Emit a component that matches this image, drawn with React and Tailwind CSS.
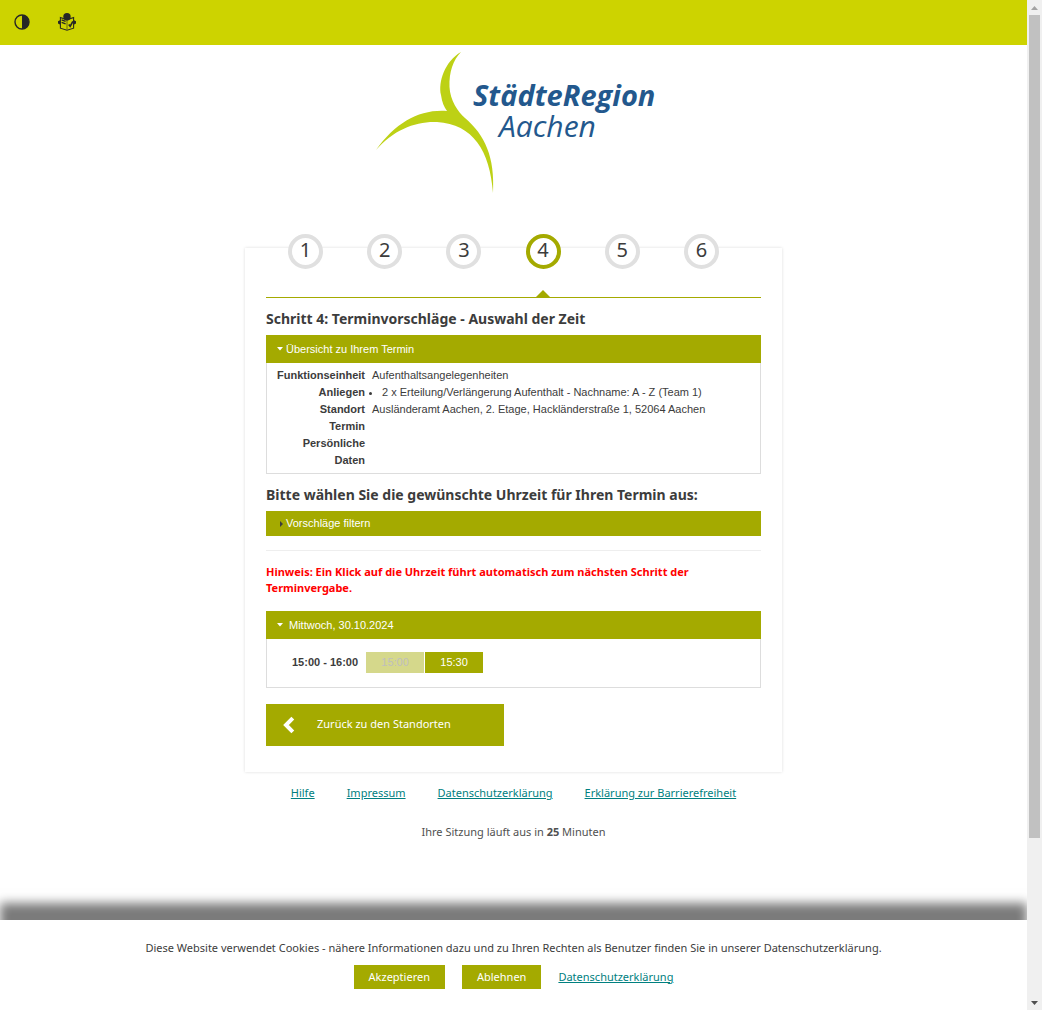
import React from "react";

const SANS = "font-['Noto_Sans',sans-serif]";
const ARIAL = "font-['Liberation_Sans',Arial,sans-serif]";

function ContrastIcon() {
  return (
    <svg viewBox="0 0 16 16" className="size-4" aria-hidden="true">
      <circle cx="8" cy="8" r="7" fill="none" stroke="#262626" strokeWidth="1.4" />
      <path d="M8 1a7 7 0 0 1 0 14z" fill="#262626" />
    </svg>
  );
}

function EasyReadIcon() {
  return (
    <svg viewBox="0 0 18 18" className="size-[18px]" aria-hidden="true">
      <path
        d="M2.400 4.600v10.600L9 17.200l6.600-2V4.600L9 6.800z"
        fill="#cdd300"
        stroke="#2b2b20"
        strokeWidth="1.1"
      />
      <path d="M9 7.200V17" stroke="#6a6c14" strokeWidth="1" />
      <circle cx="9" cy="3.700" r="3.700" fill="#262626" />
      <path d="M3.600 6.800l4 1.500M3.600 9.400l4 1.500" stroke="#262626" strokeWidth="1.300" />
      <path d="M10.800 11.400l1.400 1.900 2.700-4.900" fill="none" stroke="#262626" strokeWidth="1.700" />
      <path d="M2.400 7L0 8.200v2.400l2.400 1.200zM15.600 7L18 8.200v2.400l-2.400 1.200z" fill="#262626" />
    </svg>
  );
}

function Logo() {
  return (
    <svg viewBox="0 0 276 141" className="h-[141px] w-[276px] overflow-visible" role="img" aria-label="StädteRegion Aachen">
      <path
        d="M85 0C69 9 62 30 65 43C66 50 68 55 71 59C44 57 20 70 0 98C17 78 40 69 61 70C97 72 114 99 117 141C119 105 109 83 89 66C82 60 74 48 73.500 35C73 20 77 8 85 0Z"
        fill="#bdd115"
      />
      <text x="97" y="54" fill="#23588d" className="font-['Open_Sans',sans-serif] text-[29px] font-bold italic">
        StädteRegion
      </text>
      <text x="123" y="85" fill="#23588d" className="font-['Open_Sans',sans-serif] text-[30px] italic">
        Aachen
      </text>
    </svg>
  );
}

function StepIndicator({ number, active }) {
  return (
    <li className="flex flex-col items-center" aria-current={active ? "step" : undefined}>
      <span
        className={
          "flex size-[35px] items-center justify-center rounded-full border-4 bg-white pb-1 text-[20px] leading-none " +
          (active ? "border-[#a4aa00]" : "border-[#e0e0e0]")
        }
      >
        {number}
      </span>
      {active && (
        <svg viewBox="0 0 14 7" className="mt-[21px] h-[7px] w-[14px]" aria-hidden="true">
          <path d="M0 7L7 0l7 7z" fill="#a4aa00" />
        </svg>
      )}
    </li>
  );
}

function Triangle({ open }) {
  return (
    <svg viewBox="0 0 6 6" className="size-[6px]" aria-hidden="true">
      {open ? <path d="M0 1h6L3 4.500z" fill="#fff" /> : <path d="M3 0v6l3-3z" fill="#3c3c3c" />}
    </svg>
  );
}

function Panel({ title, open, titleClass, children }) {
  return (
    <details open={open} className={ARIAL}>
      <summary
        className={
          "flex cursor-pointer list-none items-center bg-[#a4aa00] pl-[11px] text-[11px] text-white " + titleClass
        }
      >
        <Triangle open={open} />
        {title}
      </summary>
      {children}
    </details>
  );
}

const overview = [
  ["Funktionseinheit", "Aufenthaltsangelegenheiten"],
  ["Anliegen", ["2 x Erteilung/Verlängerung Aufenthalt - Nachname: A - Z (Team 1)"]],
  ["Standort", "Ausländeramt Aachen, 2. Etage, Hackländerstraße 1, 52064 Aachen"],
  ["Termin", ""],
  ["Persönliche Daten", ""],
];

const footerLinks = ["Hilfe", "Impressum", "Datenschutzerklärung", "Erklärung zur Barrierefreiheit"];

function Scrollbar() {
  return (
    <div className="flex w-[15px] shrink-0 flex-col items-center bg-[#f0f0f0]" aria-hidden="true">
      <div className="flex h-[15px] items-center">
        <svg viewBox="0 0 7 4" className="h-1 w-[7px]">
          <path d="M0 4L3.500 0 7 4z" fill="#a3a3a3" />
        </svg>
      </div>
      <div className="w-[11px] grow-[84] bg-[#c1c1c1]" />
      <div className="grow-[16]" />
      <div className="flex h-[15px] items-center">
        <svg viewBox="0 0 7 4" className="h-1 w-[7px]">
          <path d="M0 0h7L3.500 4z" fill="#505050" />
        </svg>
      </div>
    </div>
  );
}

export default function App() {
  return (
    <div className={"flex min-h-screen bg-white text-[11px] text-[#3c3c3c] " + SANS}>
      <div className="flex min-w-0 grow flex-col overflow-hidden">
        <header className="flex h-[45px] items-center gap-7 bg-[#cdd300] pb-[2px] pl-[14px]">
          <button type="button" aria-label="Kontrast ändern">
            <ContrastIcon />
          </button>
          <button type="button" aria-label="Leichte Sprache">
            <EasyReadIcon />
          </button>
        </header>

        <main className="flex grow flex-col items-center pt-[7px]">
          <Logo />

          <div className="mt-[55px] w-full max-w-[537px] px-[21px] pb-[26px] shadow-[0_0_3px_#dcdcdc]">
            <ol className="-mt-[14px] grid h-[63px] grid-cols-6 pr-5">
              {[1, 2, 3, 4, 5, 6].map((n) => (
                <StepIndicator key={n} number={n} active={n === 4} />
              ))}
            </ol>
            <div className="border-t border-[#a4aa00]" />

            <h1 className="mt-[11px] mb-[6px] text-[14px] leading-5 font-bold">
              Schritt 4: Terminvorschläge - Auswahl der Zeit
            </h1>
            <Panel title="Übersicht zu Ihrem Termin" open titleClass="h-7 gap-[3px]">
              <dl className="grid grid-cols-[98px_1fr] gap-x-[7px] border border-t-0 border-[#ddd] py-1 leading-[17px]">
                {overview.map(([label, value]) => (
                  <React.Fragment key={label}>
                    <dt className="pl-2 text-right font-bold">{label}</dt>
                    <dd>
                      {Array.isArray(value) ? (
                        <ul className="list-disc pl-[10px]">
                          {value.map((v) => (
                            <li key={v}>{v}</li>
                          ))}
                        </ul>
                      ) : (
                        value
                      )}
                    </dd>
                  </React.Fragment>
                ))}
              </dl>
            </Panel>

            <h2 className="mt-[11px] mb-[6px] text-[14px] leading-5 font-bold">
              Bitte wählen Sie die gewünschte Uhrzeit für Ihren Termin aus:
            </h2>
            <Panel title="Vorschläge filtern" open={false} titleClass="h-[25px] gap-[3px]" />

            <div className="mt-[14px] border-t border-[#eee]" />
            <p className="mt-[13px] mb-[15px] leading-4 font-bold text-[#f00]">
              Hinweis: Ein Klick auf die Uhrzeit führt automatisch zum nächsten Schritt der Terminvergabe.
            </p>

            <Panel title="Mittwoch, 30.10.2024" open titleClass="h-7 gap-[6px]">
              <table className="block border border-t-0 border-[#ddd] pt-[13px] pb-[14px] pl-[25px]">
                <tbody>
                  <tr>
                    <th scope="row" className="pr-2 font-bold">
                      15:00 - 16:00
                    </th>
                    <td className="pr-px">
                      <button
                        type="button"
                        disabled
                        className="block h-[21px] w-[58px] bg-[#a4aa00] text-[#707070] opacity-45"
                      >
                        15:00
                      </button>
                    </td>
                    <td>
                      <button type="button" className="block h-[21px] w-[58px] bg-[#a4aa00] text-white">
                        15:30
                      </button>
                    </td>
                  </tr>
                </tbody>
              </table>
            </Panel>

            <button
              type="button"
              className="mt-4 flex h-[42px] w-[238px] items-center gap-[22px] bg-[#a4aa00] pl-[17px] text-white"
            >
              <svg viewBox="0 0 12 18" className="h-[18px] w-3" aria-hidden="true">
                <path d="M9.800 2.200L3 9l6.800 6.800" fill="none" stroke="#fff" strokeWidth="4" />
              </svg>
              <span className="pb-[2px]">Zurück zu den Standorten</span>
            </button>
          </div>

          <nav className="mt-[13px] flex gap-8 leading-4">
            {footerLinks.map((l) => (
              <a key={l} href="#" className="text-[#008080] underline">
                {l}
              </a>
            ))}
          </nav>
          <p className="mt-[23px] leading-4 text-[#505050]">
            Ihre Sitzung läuft aus in <b>25</b> Minuten
          </p>
        </main>

        <aside className="flex flex-col items-center bg-white pt-5 pb-[21px] shadow-[0_-17px_10px_#7b7b7b]">
          <p className="leading-4">
            Diese Website verwendet Cookies - nähere Informationen dazu und zu Ihren Rechten als Benutzer finden Sie in
            unserer Datenschutzerklärung.
          </p>
          <div className="mt-[9px] flex items-center gap-[17px]">
            <button type="button" className="h-6 bg-[#a4aa00] px-[15px] text-white">
              Akzeptieren
            </button>
            <button type="button" className="h-6 bg-[#a4aa00] px-[15px] text-white">
              Ablehnen
            </button>
            <a href="#" className="text-[#008080] underline">
              Datenschutzerklärung
            </a>
          </div>
        </aside>
      </div>
      <Scrollbar />
    </div>
  );
}
